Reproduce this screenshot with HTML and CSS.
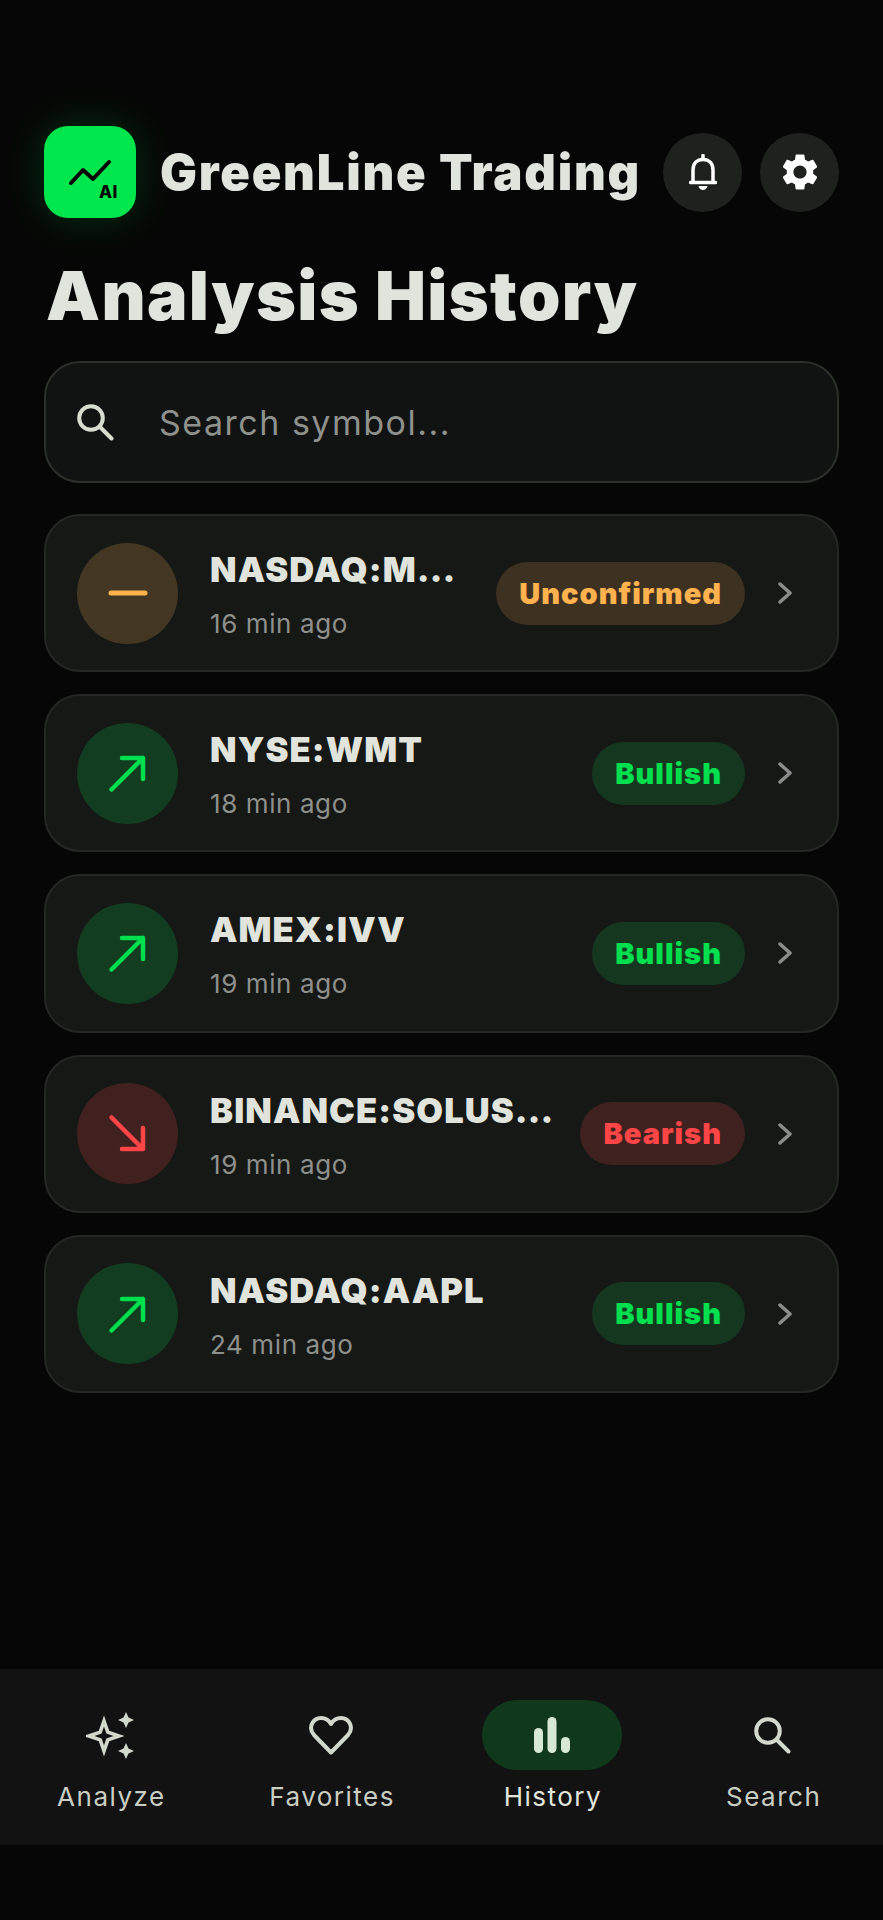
FILE: index.html
```html
<!DOCTYPE html>
<html lang="en">
<head>
<meta charset="utf-8">
<title>Analysis History</title>
<link rel="stylesheet" href="styles.css">
</head>
<body>
<div class="app">
  <header class="header">
    <div class="logo">
      <svg class="logo-chart" viewBox="0 0 92 92" width="92" height="92"><path d="M27 57 39 44 49 53 65 36"/></svg>
      <span class="logo-ai">AI</span>
    </div>
    <div class="brand">GreenLine Trading</div>
    <button class="round-btn" aria-label="Notifications">
      <svg viewBox="0 0 28 36" width="28" height="36" class="bell"><path d="M4 28V16C4 9.500 8 5.500 14 5.500S24 9.500 24 16V28"/><path d="M1.500 28.500H26.500"/><path d="M14 1.500V4"/><path class="fill" d="M9.500 32H18.500C18 34.500 16 36 14 36S10 34.500 9.500 32Z"/></svg>
    </button>
    <button class="round-btn" aria-label="Settings">
      <svg viewBox="0 0 24 24" width="44" height="44" class="gear"><path d="M19.14 12.94c.04-.3.06-.61.06-.94 0-.32-.02-.64-.07-.94l2.03-1.58a.49.49 0 0 0 .12-.61l-1.92-3.32a.488.488 0 0 0-.59-.22l-2.39.96c-.5-.38-1.03-.7-1.62-.94l-.36-2.54a.484.484 0 0 0-.48-.41h-3.84c-.24 0-.43.17-.47.41l-.36 2.54c-.59.24-1.13.57-1.62.94l-2.39-.96c-.22-.08-.47 0-.59.22L2.74 8.87c-.12.21-.08.47.12.61l2.03 1.58c-.05.3-.09.63-.09.94s.02.64.07.94l-2.03 1.58a.49.49 0 0 0-.12.61l1.92 3.32c.12.22.37.29.59.22l2.39-.96c.5.38 1.03.7 1.62.94l.36 2.54c.05.24.24.41.48.41h3.84c.24 0 .44-.17.47-.41l.36-2.54c.59-.24 1.13-.56 1.62-.94l2.39.96c.22.08.47 0 .59-.22l1.92-3.32c.12-.22.07-.47-.12-.61l-2.01-1.58zM12 15.6c-1.98 0-3.6-1.62-3.6-3.6s1.62-3.6 3.6-3.6 3.6 1.62 3.6 3.6-1.62 3.6-3.6 3.6z"/></svg>
    </button>
  </header>

  <h1 class="title">Analysis History</h1>

  <div class="search">
    <svg class="search-icon" viewBox="0 0 37 37" width="37" height="37"><circle cx="14" cy="14" r="11.800"/><path d="M23 23 34.500 34.500"/></svg>
    <span class="search-text">Search symbol...</span>
  </div>

  <main class="list">
    <article class="card amber">
      <div class="trend"><svg viewBox="0 0 48 48" width="48" height="48"><path d="M7 24H41"/></svg></div>
      <div class="info"><div class="symbol">NASDAQ:MSFT</div><div class="time">16 min ago</div></div>
      <span class="badge">Unconfirmed</span>
      <svg class="chevron" viewBox="0 0 14 22" width="14" height="22"><path d="M2 2 12 11 2 20"/></svg>
    </article>
    <article class="card green">
      <div class="trend"><svg viewBox="0 0 48 48" width="48" height="48"><path d="M7.500 40.500 39 9M18 9H39V30"/></svg></div>
      <div class="info"><div class="symbol">NYSE:WMT</div><div class="time">18 min ago</div></div>
      <span class="badge">Bullish</span>
      <svg class="chevron" viewBox="0 0 14 22" width="14" height="22"><path d="M2 2 12 11 2 20"/></svg>
    </article>
    <article class="card green">
      <div class="trend"><svg viewBox="0 0 48 48" width="48" height="48"><path d="M7.500 40.500 39 9M18 9H39V30"/></svg></div>
      <div class="info"><div class="symbol">AMEX:IVV</div><div class="time">19 min ago</div></div>
      <span class="badge">Bullish</span>
      <svg class="chevron" viewBox="0 0 14 22" width="14" height="22"><path d="M2 2 12 11 2 20"/></svg>
    </article>
    <article class="card red">
      <div class="trend"><svg viewBox="0 0 48 48" width="48" height="48"><path d="M7.500 7.500 39 39M18 39H39V18"/></svg></div>
      <div class="info"><div class="symbol">BINANCE:SOLUSDT</div><div class="time">19 min ago</div></div>
      <span class="badge">Bearish</span>
      <svg class="chevron" viewBox="0 0 14 22" width="14" height="22"><path d="M2 2 12 11 2 20"/></svg>
    </article>
    <article class="card green">
      <div class="trend"><svg viewBox="0 0 48 48" width="48" height="48"><path d="M7.500 40.500 39 9M18 9H39V30"/></svg></div>
      <div class="info"><div class="symbol">NASDAQ:AAPL</div><div class="time">24 min ago</div></div>
      <span class="badge">Bullish</span>
      <svg class="chevron" viewBox="0 0 14 22" width="14" height="22"><path d="M2 2 12 11 2 20"/></svg>
    </article>
  </main>

  <nav class="nav">
    <div class="nav-item">
      <div class="nav-icon">
        <svg viewBox="0 0 48 48" width="48" height="48" class="sparkle">
          <path class="outline" d="M18 10 21.800 21.200 33 25 21.800 28.800 18 40 14.200 28.800 3 25 14.200 21.200Z"/>
          <path class="solid" d="M40 1 42.500 6.500 48 9 42.500 11.500 40 17 37.500 11.500 32 9 37.500 6.500Z"/>
          <path class="solid" d="M40 32 42.500 37.500 48 40 42.500 42.500 40 48 37.500 42.500 32 40 37.500 37.500Z"/>
        </svg>
      </div>
      <span class="nav-label">Analyze</span>
    </div>
    <div class="nav-item">
      <div class="nav-icon">
        <svg viewBox="0 0 44 39" width="44" height="39" class="heart"><path d="M22 36.500 5 19C-1.500 11.500 4 2 12 2 16.500 2 20 4.500 22 8 24 4.500 27.500 2 32 2 40 2 45.500 11.500 39 19Z"/></svg>
      </div>
      <span class="nav-label">Favorites</span>
    </div>
    <div class="nav-item active">
      <div class="nav-icon">
        <svg viewBox="0 0 36 36" width="36" height="36" class="bars"><rect x="0" y="11" width="9" height="25" rx="4.500"/><rect x="13.500" y="0" width="9" height="36" rx="4.500"/><rect x="27" y="20" width="9" height="16" rx="4.500"/></svg>
      </div>
      <span class="nav-label">History</span>
    </div>
    <div class="nav-item">
      <div class="nav-icon">
        <svg viewBox="0 0 37 37" width="37" height="37" class="lens"><circle cx="14" cy="14" r="11.800"/><path d="M23 23 34.500 34.500"/></svg>
      </div>
      <span class="nav-label">Search</span>
    </div>
  </nav>
</div>
</body>
</html>
```
FILE: styles.css
```css
* { box-sizing: border-box; }
html, body { margin: 0; padding: 0; background: #060606; }
body { font-family: Inter, "Liberation Sans", sans-serif; color: #e1e4dc; }
.app { height: 1920px; display: flex; flex-direction: column; padding-top: 126px; overflow: hidden; }

.header { display: flex; align-items: center; padding: 0 44px; }
.logo { position: relative; flex: none; width: 92px; height: 92px; border-radius: 24px; background: #00e64d; box-shadow: 0 0 44px rgba(0, 230, 77, .2); }
.logo-chart { display: block; fill: none; stroke: #050505; stroke-width: 4; stroke-linecap: round; stroke-linejoin: round; }
.logo-ai { position: absolute; left: 55px; top: 56px; font-size: 17px; line-height: 20px; font-weight: 800; color: #050505; letter-spacing: .5px; }
.brand { flex: 1; margin-left: 24px; padding-top: 2px; font-size: 49px; line-height: 90px; font-weight: 900; letter-spacing: 1.750px; white-space: nowrap; }
.round-btn { flex: none; width: 79px; height: 79px; margin-left: 18px; padding: 0; border: 0; border-radius: 50%; background: #1f211f; display: flex; align-items: center; justify-content: center; }
.bell { fill: none; stroke: #fff; stroke-width: 3.500; stroke-linecap: round; }
.bell .fill { fill: #fff; stroke: none; }
.gear { fill: #fff; }

.title { margin: 36px 0 0; padding: 0 46px; font-size: 68px; line-height: 82px; font-weight: 900; letter-spacing: 1.350px; }

.search { margin: 25px 44px 0; height: 122px; display: flex; align-items: center; padding: 0 31px; background: #111212; border: 2px solid #2c302a; border-radius: 36px; }
.search-icon { flex: none; fill: none; stroke: #d6ddcf; stroke-width: 4; stroke-linecap: round; }
.search-text { margin-left: 45px; font-size: 34px; letter-spacing: 1.500px; color: #8e918c; }

.list { flex: 1; display: flex; flex-direction: column; gap: 22px; margin: 31px 44px 0; }
.card { height: 158.200px; display: flex; align-items: center; padding: 0 45px 0 31px; background: #161816; border: 2px solid #252725; border-radius: 36px; }
.trend { flex: none; width: 101px; height: 101px; border-radius: 50%; display: flex; align-items: center; justify-content: center; }
.trend svg { fill: none; stroke-width: 4.500; stroke-linecap: round; stroke-linejoin: round; }
.info { flex: 1; min-width: 0; margin: 0 20px 0 32px; padding-top: 3px; }
.symbol { font-size: 34.500px; line-height: 44px; font-weight: 900; letter-spacing: 1.100px; white-space: nowrap; overflow: hidden; text-overflow: ellipsis; }
.time { margin-top: 15px; font-size: 26px; line-height: 34px; letter-spacing: .600px; color: #8e908c; }
.badge { flex: none; height: 63px; padding: 0 23px; border-radius: 32px; font-size: 29px; line-height: 63px; font-weight: 900; letter-spacing: 1px; }
.chevron { flex: none; margin-left: 33px; fill: none; stroke: #8c8c8c; stroke-width: 3.500; stroke-linecap: round; stroke-linejoin: round; }

.amber .trend { background: #433623; }
.amber .trend svg { stroke: #ffb24d; stroke-width: 5; }
.amber .badge { background: #3d3121; color: #ffb24d; }
.green .trend { background: #133d20; }
.green .trend svg { stroke: #00e04f; }
.green .badge { background: #153720; color: #00e04f; }
.red .trend { background: #412120; }
.red .trend svg { stroke: #ff4545; }
.red .badge { background: #3f2120; color: #ff4545; }

.nav { flex: none; height: 176px; margin-bottom: 75px; display: grid; grid-template-columns: repeat(4, 1fr); background: #121212; }
.nav-item { display: flex; flex-direction: column; align-items: center; padding-top: 31px; }
.nav-icon { width: 140px; height: 70px; border-radius: 35px; display: flex; align-items: center; justify-content: center; }
.nav-label { margin-top: 10px; padding-left: 2px; font-size: 26px; line-height: 34px; letter-spacing: 1.500px; color: #c9cec3; }
.active .nav-icon { background: #10391b; }
.active .nav-label { color: #e1e6dc; }
.sparkle .outline { fill: none; stroke: #d2d8cb; stroke-width: 3.600; stroke-linejoin: miter; }
.sparkle .solid { fill: #d2d8cb; }
.heart { fill: none; stroke: #d2d8cb; stroke-width: 4; stroke-linejoin: round; }
.bars { fill: #d7e8d3; }
.lens { fill: none; stroke: #d2d8cb; stroke-width: 4; stroke-linecap: round; }
```
